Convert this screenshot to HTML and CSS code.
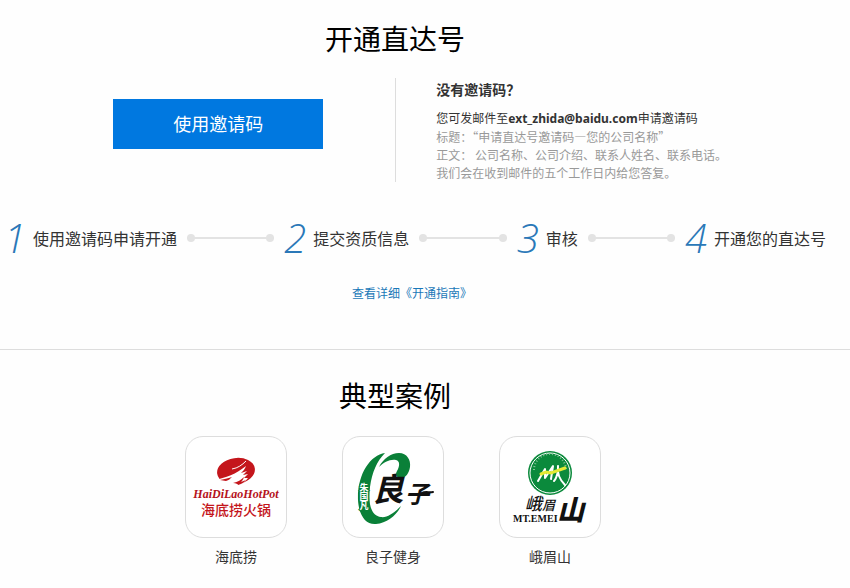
FILE: index.html
```html
<!DOCTYPE html>
<html lang="zh-CN">
<head>
  <meta charset="UTF-8">
  <title>开通直达号</title>
  <link rel="stylesheet" href="styles.css">
</head>
<body>

  <section class="open">
    <h2 class="title">开通直达号</h2>

    <div class="intro">
      <div class="intro-action">
        <button class="btn" type="button">使用邀请码</button>
      </div>
      <div class="intro-text">
        <h3>没有邀请码？</h3>
        <p class="mail">您可发邮件至<strong>ext_zhida@baidu.com</strong>申请邀请码</p>
        <p>标题：“申请直达号邀请码—您的公司名称”</p>
        <p>正文： 公司名称、公司介绍、联系人姓名、联系电话。</p>
        <p>我们会在收到邮件的五个工作日内给您答复。</p>
      </div>
    </div>

    <div class="steps">
      <div class="step"><span class="num">1</span>使用邀请码申请开通</div>
      <div class="line"></div>
      <div class="step"><span class="num">2</span>提交资质信息</div>
      <div class="line"></div>
      <div class="step"><span class="num">3</span>审核</div>
      <div class="line"></div>
      <div class="step"><span class="num">4</span>开通您的直达号</div>
    </div>

    <div class="guide"><a href="#">查看详细《开通指南》</a></div>
  </section>

  <section class="cases">
    <h2 class="title">典型案例</h2>
    <ul class="case-list">
      <li class="case">
        <div class="logo">
          <svg viewBox="0 0 100 100" width="100" height="100">
            <ellipse cx="50" cy="34" rx="19" ry="13" fill="#c4161c" transform="rotate(-8 50 34)"/>
            <path fill="#fff" d="M28 43C40 41 50 37 60 29c-1 3-3 5-5 7l6-2-4 4 5-1-4 4 4 0-5 6-11 3-18-1z"/>
            <path fill="#c4161c" d="M34 43c5-1 9-2 12-3-2 2-3 3-6 4zM47 46c5-1 8-3 11-6-1 3-2 4-3 5l5-2c-2 3-5 4-8 5 0-1-2-2-5-2z"/>
            <path fill="none" stroke="#fff" stroke-width="1" d="M46 32c6-1 10-4 14-8"/>
            <text class="hdl-en" x="50" y="61" text-anchor="middle">HaiDiLaoHotPot</text>
            <text class="hdl-cn" x="50" y="78" text-anchor="middle">海底捞火锅</text>
          </svg>
        </div>
        <p>海底捞</p>
      </li>
      <li class="case">
        <div class="logo">
          <svg viewBox="0 0 100 100" width="100" height="100">
            <path fill="#0a8038" d="M42 16C27 18 14 38 15 63c1 16 8 25 18 24 11-1 21-9 25-18-7 7-14 12-20 11-10-1-13-13-11-30C29 35 34 24 42 16z"/>
            <path fill="#0a8038" d="M36 30c4-8 12-14 20-14 8 0 12 7 11 14-1 6-4 11-9 11-5 0-6-4-4-7 3-5 3-10-1-11-6-1-12 2-17 7z"/>
            <text class="lz-side" x="21" y="46">朱国凡</text>
            <text class="lz-big" x="29" y="64">良</text>
            <text class="lz-mid" x="62" y="66">子</text>
            <path fill="none" stroke="#111" stroke-width="2" stroke-linecap="round" d="M79 56c4-2 7 0 11-1"/>
          </svg>
        </div>
        <p>良子健身</p>
      </li>
      <li class="case">
        <div class="logo">
          <svg viewBox="0 0 100 100" width="100" height="100">
            <circle cx="50" cy="36" r="22" fill="#0b8a3c"/>
            <circle cx="50" cy="36" r="20" fill="none" stroke="#fff" stroke-width="1"/>
            <path fill="none" stroke="#7fc294" stroke-width="2" stroke-dasharray="1 2" d="M34 33a16 16 0 0 1 32 0"/>
            <path fill="none" stroke="#fff" stroke-width="2" stroke-linecap="round" stroke-linejoin="round" d="M38 44l7-12 0 9 8-12-2 13M58 29c-1 7 1 13 7 19M58 34c-1 5-2 8-4 10"/>
            <path fill="none" stroke="#e5ea35" stroke-width="3" stroke-linecap="round" d="M41 37l5-2 5 1 14-5"/>
            <text class="em-small" x="25" y="73">峨<tspan class="em-tiny">眉</tspan></text>
            <text class="em-big" x="57" y="83">山</text>
            <text class="em-en" x="13" y="85">MT.EMEI</text>
          </svg>
        </div>
        <p>峨眉山</p>
      </li>
    </ul>
  </section>

</body>
</html>
```
FILE: styles.css
```css
* {
  margin: 0;
  padding: 0;
  box-sizing: border-box;
}

body {
  background: #fefefe;
  color: #333;
  font-family: "Noto Sans CJK SC", "Open Sans", sans-serif;
  font-size: 14px;
}

.title {
  padding-right: 60px;
  font-size: 28px;
  font-weight: 400;
  line-height: 40px;
  text-align: center;
  color: #000;
}

.open {
  padding: 18px 0 46px;
  border-bottom: 1px solid #ddd;
}

.intro {
  display: grid;
  grid-template-columns: 93fr 107fr;
  margin-top: 20px;
}

.intro-action {
  display: flex;
  justify-content: flex-end;
  align-items: center;
  padding: 0 72px 12px 0;
}

.btn {
  width: 210px;
  height: 50px;
  padding-bottom: 2px;
  border: none;
  background: #0078e0;
  color: #fff;
  font-family: inherit;
  font-size: 18px;
  cursor: pointer;
}

.btn:hover {
  background: #0069c5;
}

.intro-text {
  padding-left: 40px;
  border-left: 1px solid #ddd;
  font-size: 12px;
  line-height: 18px;
  color: #999;
}

.intro-text h3 {
  margin-bottom: 8px;
  font-size: 14px;
  line-height: 23px;
  color: #333;
}

.intro-text .mail {
  color: #333;
}

.mail strong {
  font-family: "Noto Sans", "Open Sans", sans-serif;
}

.steps {
  display: flex;
  align-items: center;
  gap: 10px;
  margin-top: 32px;
  padding: 0 24px 0 4px;
}

.step {
  display: flex;
  align-items: center;
  gap: 7px;
  font-size: 16px;
  line-height: 48px;
  white-space: nowrap;
}

.num {
  font-family: "Open Sans", sans-serif;
  font-size: 40px;
  font-style: italic;
  font-weight: 300;
  color: #2a78b8;
}

.line {
  display: flex;
  flex: 1;
  align-items: center;
  justify-content: space-between;
  height: 8px;
  background: linear-gradient(#e3e3e3, #e3e3e3) center / 100% 2px no-repeat;
}

.line::before,
.line::after {
  content: "";
  width: 8px;
  height: 8px;
  border-radius: 50%;
  background: #e3e3e3;
}

.guide {
  margin-top: 21px;
  padding-right: 26px;
  font-size: 12px;
  line-height: 20px;
  text-align: center;
}

.guide a {
  color: #1a78b8;
  text-decoration: none;
}

.cases {
  padding: 25px 0 20px;
}

.case-list {
  display: flex;
  justify-content: center;
  gap: 55px;
  margin-top: 21px;
  padding-right: 64px;
  list-style: none;
}

.case {
  text-align: center;
  line-height: 20px;
}

.logo {
  width: 102px;
  height: 102px;
  margin-bottom: 8px;
  border: 1px solid #ddd;
  border-radius: 18px;
  background: #fff;
}

.logo svg {
  display: block;
}

/* logo lettering */
.hdl-en {
  font: italic 700 12px "Liberation Serif", serif;
  fill: #b5121b;
}

.hdl-cn {
  font-size: 14px;
  font-weight: 500;
  fill: #c4161c;
}

.lz-side {
  font-size: 9px;
  font-weight: 700;
  writing-mode: vertical-rl;
  fill: #fff;
  stroke: #0a8038;
  stroke-width: 2px;
  paint-order: stroke;
}

.lz-big {
  font: italic 700 32px "Noto Sans CJK SC", sans-serif;
  fill: #111;
}

.lz-mid {
  font: italic 700 24px "Noto Sans CJK SC", sans-serif;
  fill: #111;
}

.em-small {
  font: italic 500 17px "Noto Sans CJK SC", sans-serif;
  fill: #111;
}

.em-tiny {
  font-size: 13px;
}

.em-big {
  font: italic 900 27px "Noto Sans CJK SC", sans-serif;
  fill: #111;
}

.em-en {
  font: 700 10px "Liberation Serif", serif;
  fill: #111;
}
```
